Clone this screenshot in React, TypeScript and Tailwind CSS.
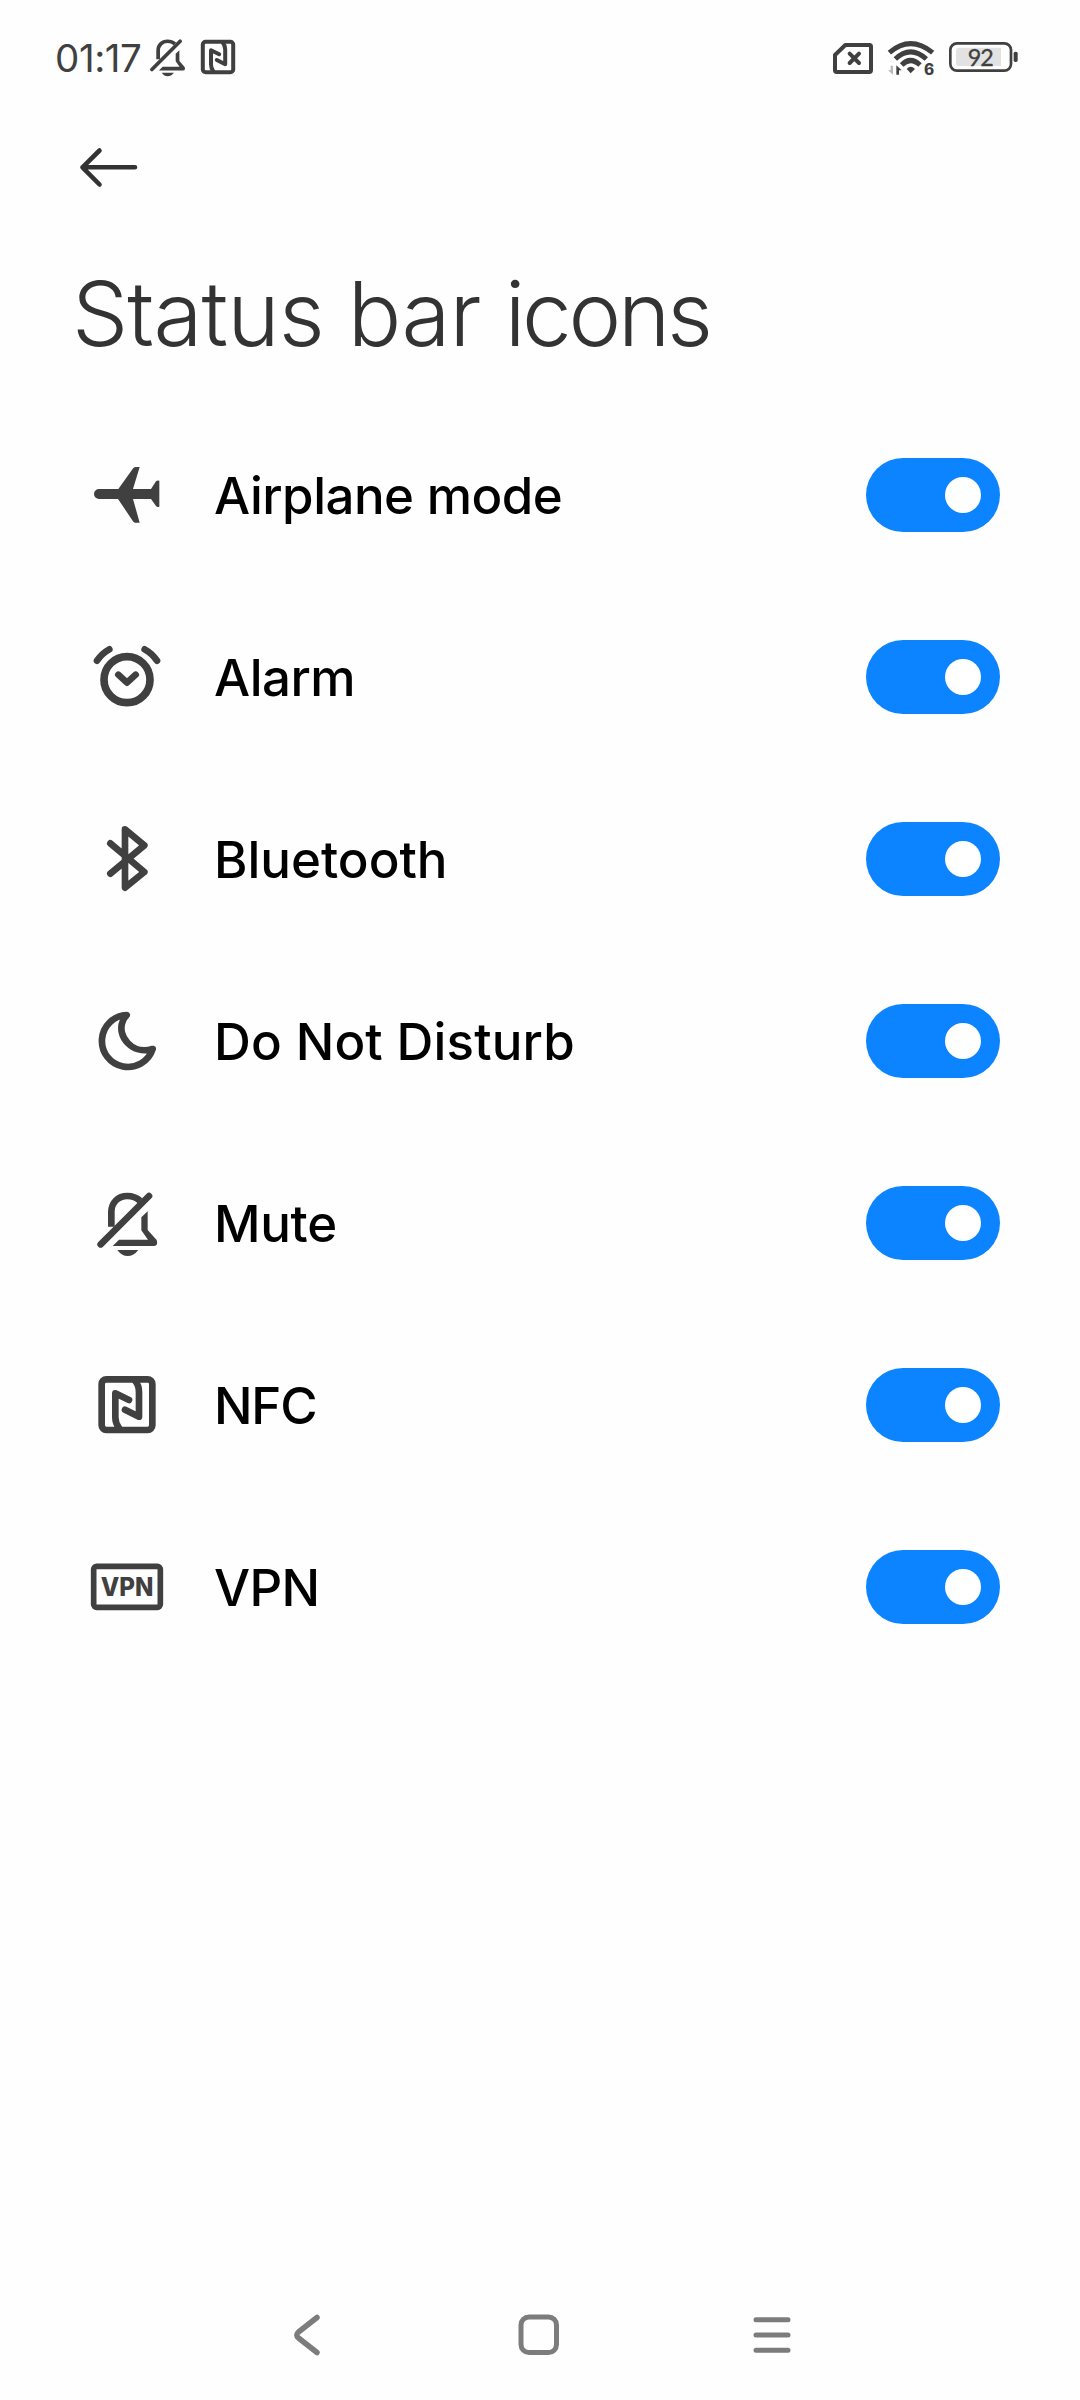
import React, { useState } from 'react';
import { clsx } from 'clsx';

type Item = {
  id: string;
  label: string;
  tracking: string;
  icon: React.ReactNode;
};

const INK = '#404040';

const RowIcon = ({ top = 0, children }: { top?: number; children: React.ReactNode }) => (
  <svg
    className="w-[100px] h-[90px] shrink-0"
    viewBox={`0 ${top} 300 270`}
    fill="none"
    stroke={INK}
    strokeWidth={20}
    strokeLinecap="round"
    strokeLinejoin="round"
  >
    {children}
  </svg>
);

const BellOff = () => (
  <>
    <path d="M94 170V126C94 98 114 78 142 78C158 78 170 83 180 92" strokeLinecap="butt" />
    <path d="M62 223L207 78" />
    <path d="M184 142L203 124V180L230 210Q236 227 222 228H98L117 209H204L184 181Z" fill={INK} stroke="none" />
    <path d="M112 240H175Q161 258 143 258T112 240Z" fill={INK} stroke="none" />
  </>
);

const Nfc = () => (
  <>
    <rect x="65" y="58" width="152" height="152" rx="14" />
    <path d="M117 204Q106 190 106 172V100L147 120" />
    <path d="M165 62Q177 76 177 96V170L135 149" />
  </>
);

const items: Item[] = [
  {
    id: 'airplane',
    label: 'Airplane mode',
    tracking: 'tracking-[-0.5px]',
    icon: (
      <RowIcon>
        <path
          d="M57 117H115L160 54Q163 51 167 51H179L159 117H213L228 94Q232 90 238 92V170Q232 173 228 168L213 147H159L179 218H166Q163 218 160 215L114 147H57A15 15 0 0 1 57 117Z"
          fill={INK}
          stroke="none"
        />
      </RowIcon>
    ),
  },
  {
    id: 'alarm',
    label: 'Alarm',
    tracking: 'tracking-[-0.5px]',
    icon: (
      <RowIcon top={6}>
        <circle cx="141" cy="149" r="69" strokeWidth={23} />
        <path d="M115 134L141 158L167 134" />
        <path d="M51 92Q66 70 88 58M194 58Q216 70 231 92" />
      </RowIcon>
    ),
  },
  {
    id: 'bluetooth',
    label: 'Bluetooth',
    tracking: 'tracking-[0px]',
    icon: (
      <RowIcon top={12}>
        <path d="M91 100L193 186L135 233V58L193 106L91 191" />
      </RowIcon>
    ),
  },
  {
    id: 'dnd',
    label: 'Do Not Disturb',
    tracking: 'tracking-[0.15px]',
    icon: (
      <RowIcon top={18}>
        <path d="M140 75A78 78 0 1 0 218 177C158 196 108 138 129 92Q132 84 140 75Z" />
      </RowIcon>
    ),
  },
  {
    id: 'mute',
    label: 'Mute',
    tracking: 'tracking-[-0.3px]',
    icon: <RowIcon top={24}><BellOff /></RowIcon>,
  },
  {
    id: 'nfc',
    label: 'NFC',
    tracking: 'tracking-[-1.2px]',
    icon: <RowIcon><Nfc /></RowIcon>,
  },
  {
    id: 'vpn',
    label: 'VPN',
    tracking: 'tracking-[-0.7px]',
    icon: (
      <RowIcon top={6}>
        <rect x="41" y="79" width="200" height="123" rx="9" strokeWidth={17} />
        <text x="141" y="168" textAnchor="middle" textLength="158" lengthAdjust="spacingAndGlyphs" fontFamily="Inter" fontWeight="800" fontSize="76" fill={INK} stroke="none">
          VPN
        </text>
      </RowIcon>
    ),
  },
];

function StatusBar() {
  return (
    <header className="h-[116px] shrink-0 flex items-start justify-between text-[#404040]">
      <div className="flex h-[80px] mt-5 items-start">
        <span className="ml-[55px] w-[93px] mt-[14px] text-[38.5px] leading-[48px] tracking-[-0.4px] whitespace-nowrap">01:17</span>
        <svg className="w-[46px] h-[46px] mt-[15px]" viewBox="42 54 236 236" fill="none" stroke={INK} strokeWidth={19} strokeLinecap="round">
          <g transform="translate(0 8)">
            <BellOff />
          </g>
        </svg>
        <svg className="w-[40px] h-[40px] mt-[17px] ml-[4px]" viewBox="41 34 200 200" fill="none" stroke={INK} strokeWidth={20} strokeLinecap="round" strokeLinejoin="round">
          <Nfc />
        </svg>
      </div>

      <svg className="w-[230px] h-[80px] mt-5 mr-[40px]" viewBox="0 0 690 240" fill="none" stroke={INK} strokeLinecap="round" strokeLinejoin="round">
        {/* no sim */}
        <path d="M106 75H178Q183 75 183 80V151Q183 156 178 156H80Q75 156 75 151V105Z" strokeWidth={12} />
        <path d="M119 101L147 129M147 101L119 129" strokeWidth={12} />
        {/* wifi */}
        <g strokeLinecap="butt" strokeWidth={15}>
          <path d="M238 98Q301 44 368 98" />
          <path d="M256 117Q301 74 349 117" />
          <path d="M275 135Q301 108 330 135" />
        </g>
        <path d="M290 147Q302 134 315 147L302 160Z" fill={INK} stroke="none" />
        <path d="M249 137V164L234 151H242V137Z" fill="#b9b9b9" stroke="none" />
        <path d="M259 164V136L275 151H267V164Z" fill={INK} stroke="none" />
        <text x="342" y="165" fontFamily="Inter" fontWeight="800" fontSize="46" fill={INK} stroke="none">6</text>
        {/* battery */}
        <rect x="421" y="70" width="182" height="82" rx="20" strokeWidth={8} />
        <path d="M448 83H573V138H448Q438 138 438 128V93Q438 83 448 83Z" fill="#e2e2e2" stroke="none" />
        <rect x="611" y="95" width="12" height="31" rx="5" fill={INK} stroke="none" />
        <text x="512" y="137" textAnchor="middle" textLength="78" fontFamily="Lato" fontSize="70" fill={INK} stroke={INK} strokeWidth={1}>92</text>
      </svg>
    </header>
  );
}

function Toggle({ on, onChange }: { on: boolean; onChange: () => void }) {
  return (
    <button
      role="switch"
      aria-checked={on}
      onClick={onChange}
      className={clsx(
        'w-[134px] h-[74px] rounded-full flex items-center px-[19px] shrink-0',
        on ? 'bg-[#0d84ff] justify-end' : 'bg-[#e6e6e6] justify-start'
      )}
    >
      <span className="size-9 rounded-full bg-white" />
    </button>
  );
}

function NavBar() {
  return (
    <nav className="h-[130px] shrink-0 flex items-center justify-between pl-[283px] pr-[283px]">
      <svg className="w-[46px] h-[50px]" viewBox="0 0 46 50" fill="none" stroke="#7c7c7c" strokeWidth={5.5} strokeLinecap="round" strokeLinejoin="round">
        <path d="M34 7.5L15.5 22Q12 25 15.5 28L34 42.5" />
      </svg>
      <svg className="w-[50px] h-[50px]" viewBox="0 0 50 50" fill="none" stroke="#7c7c7c" strokeWidth={5}>
        <rect x="8" y="7" width="35.5" height="35.5" rx="8" />
      </svg>
      <svg className="w-[50px] h-[50px]" viewBox="0 0 50 50" fill="none" stroke="#7c7c7c" strokeWidth={5} strokeLinecap="round">
        <path d="M9 9.7H41M9 25H41M9 40.3H41" />
      </svg>
    </nav>
  );
}

export default function App() {
  const [enabled, setEnabled] = useState<string[]>(items.map(i => i.id));

  const toggle = (id: string) =>
    setEnabled(prev => (prev.includes(id) ? prev.filter(x => x !== id) : [...prev, id]));

  return (
    <div className="w-[1080px] h-[2400px] bg-[#fefefe] flex flex-col font-['Inter',sans-serif] text-black overflow-hidden">
      <StatusBar />

      <button className="w-[70px] h-[102px] ml-[74px] shrink-0 flex items-center">
        <svg className="w-[70px] h-[50px]" viewBox="0 0 70 50" fill="none" stroke="#333" strokeWidth={4.6} strokeLinecap="round" strokeLinejoin="round">
          <path d="M61 25.3H8.5M25.5 8.5L8.5 25.3L25.5 42.5" />
        </svg>
      </button>

      <h1 className="h-[186px] shrink-0 pt-[36px] pl-[72px] font-light text-[89px] leading-[120px] text-[#333] whitespace-nowrap">
        <span className="tracking-[-0.9px]">Status bar </span>
        <span className="tracking-[-3.3px]">icons</span>
      </h1>

      <main className="flex-1">
        {items.map(item => (
          <div key={item.id} className="h-[182px] pl-[80px] pr-[80px] flex items-center">
            {item.icon}
            <span className={clsx('ml-[34px] mt-[2px] flex-1 text-[51px] leading-[64px] font-medium whitespace-nowrap', item.tracking)}>
              {item.label}
            </span>
            <Toggle on={enabled.includes(item.id)} onChange={() => toggle(item.id)} />
          </div>
        ))}
      </main>

      <NavBar />
    </div>
  );
}
